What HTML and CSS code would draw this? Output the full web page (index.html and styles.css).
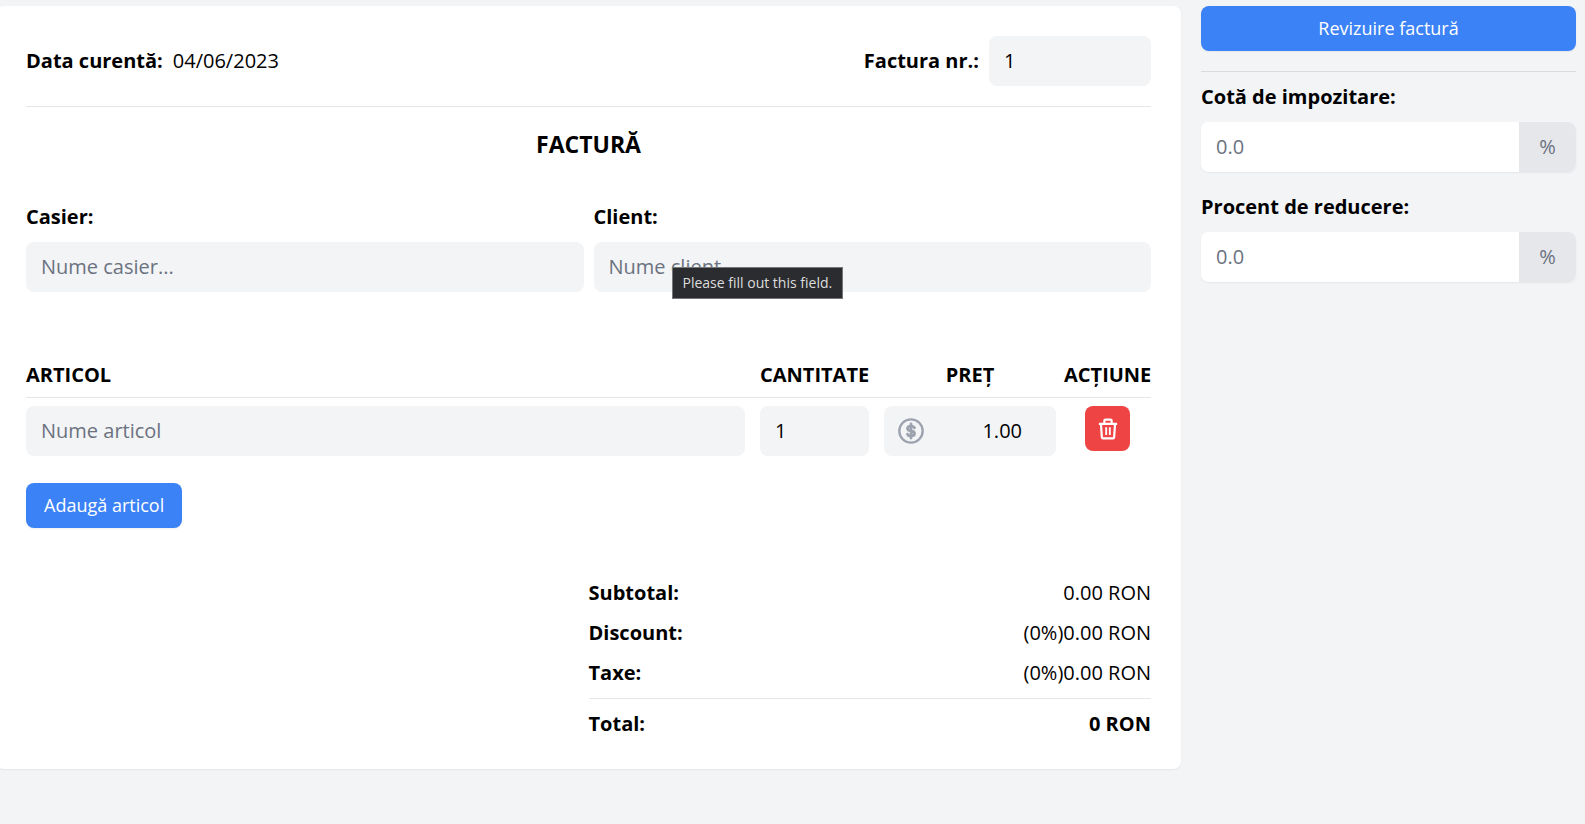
FILE: index.html
```html
<!DOCTYPE html>
<html lang="ro">
<head>
<meta charset="utf-8">
<title>Factură</title>
<link rel="stylesheet" href="styles.css">
</head>
<body>
<form class="page">
  <main class="invoice">
    <header class="invoice-head">
      <div class="inline"><span class="strong">Data curentă:</span><span>04/06/2023</span></div>
      <div class="inline"><label class="strong" for="number">Factura nr.:</label><input class="field number-field" id="number" type="number" value="1"></div>
    </header>
    <h1 class="title">FACTURĂ</h1>
    <section class="people">
      <div class="person">
        <label class="strong" for="cashier">Casier:</label>
        <input class="field" id="cashier" type="text" placeholder="Nume casier...">
      </div>
      <div class="person">
        <label class="strong" for="client">Client:</label>
        <input class="field" id="client" type="text" placeholder="Nume client...">
        <div class="tooltip" role="tooltip">Please fill out this field.</div>
      </div>
    </section>
    <table class="items">
      <thead>
        <tr><th class="col-name">ARTICOL</th><th class="col-qty">CANTITATE</th><th class="col-price">PREȚ</th><th class="col-action">ACȚIUNE</th></tr>
      </thead>
      <tbody>
        <tr>
          <td class="col-name"><input class="field" type="text" placeholder="Nume articol" aria-label="Nume articol"></td>
          <td class="col-qty"><input class="field" type="number" value="1" aria-label="Cantitate"></td>
          <td class="col-price">
            <div class="price">
              <svg class="coin" viewBox="0 0 24 24" fill="none" stroke="currentColor" stroke-width="2" stroke-linecap="round" aria-hidden="true"><circle cx="12" cy="12" r="10"/><path stroke-width="2.4" d="M15 9.300C14.500 8.200 13.300 7.800 12 7.800c-1.700 0-3 .8-3 2.100 0 1.400 1.300 1.800 3 2.100s3 .8 3 2.100-1.300 2.100-3 2.100c-1.400 0-2.600-.5-3-1.500M12 6v12"/></svg>
              <input class="field price-field" type="text" inputmode="decimal" value="1.00" aria-label="Preț">
            </div>
          </td>
          <td class="col-action">
            <button class="delete" type="button" aria-label="Șterge articol">
              <svg class="trash" viewBox="0 0 24 24" fill="none" stroke="currentColor" stroke-linejoin="round" aria-hidden="true"><path stroke-width="2.4" d="M2 6.300h20M4.300 6.300l1 14.500q.1 1.400 1.300 1.400h10.800q1.200 0 1.300-1.400l1-14.500M8 6V3q0-1.200 1.200-1.200h5.600q1.200 0 1.200 1.200V6"/><path stroke-width="2" d="M10 10v8.500M14 10v8.500"/></svg>
            </button>
          </td>
        </tr>
      </tbody>
    </table>
    <button class="button" type="button">Adaugă articol</button>
    <dl class="totals">
      <div class="total-row"><dt>Subtotal:</dt><dd>0.00 RON</dd></div>
      <div class="total-row"><dt>Discount:</dt><dd>(0%)0.00 RON</dd></div>
      <div class="total-row"><dt>Taxe:</dt><dd>(0%)0.00 RON</dd></div>
      <div class="total-row grand"><dt>Total:</dt><dd>0 RON</dd></div>
    </dl>
  </main>
  <aside class="side">
    <button class="button" type="submit">Revizuire factură</button>
    <div class="rates">
      <div class="rate">
        <label class="strong" for="tax">Cotă de impozitare:</label>
        <div class="group"><input class="field" id="tax" type="number" placeholder="0.0"><span class="unit">%</span></div>
      </div>
      <div class="rate">
        <label class="strong" for="discount">Procent de reducere:</label>
        <div class="group"><input class="field" id="discount" type="number" placeholder="0.0"><span class="unit">%</span></div>
      </div>
    </div>
  </aside>
</form>
</body>
</html>
```
FILE: styles.css
```css
*, *::before, *::after { box-sizing: border-box; }
body {
  margin: 0;
  background: #f3f4f6;
  color: #000;
  font: 400 20px/30px "Open Sans", "Noto Sans", sans-serif;
}
input, button { font: inherit; color: inherit; }
.page {
  display: flex;
  align-items: flex-start;
  gap: 20px;
  padding: 6px 9px 20px 0;
}
.invoice {
  flex: 1;
  min-width: 0;
  margin-left: -4px;
  padding: 30px;
  background: #fff;
  border-radius: 8px;
  box-shadow: 0 1px 2px rgba(0, 0, 0, 0.06);
}
.strong { font-weight: 700; }
.invoice-head {
  display: flex;
  justify-content: space-between;
  align-items: center;
  padding-bottom: 20px;
  border-bottom: 1px solid #e5e7eb;
}
.inline { display: flex; align-items: center; gap: 10px; }
.field {
  display: block;
  width: 100%;
  min-width: 0;
  height: 50px;
  margin: 0;
  padding: 0 15px 2px;
  border: 0;
  border-radius: 8px;
  background: #f3f4f6;
  appearance: textfield;
}
.field::placeholder { color: #6b7280; opacity: 1; }
.inline .number-field { width: 162px; }
.title {
  margin: 20px 0 40px;
  font-size: 23px;
  line-height: 35px;
  font-weight: 700;
  text-align: center;
}
.people { display: grid; grid-template-columns: 1fr 1fr; gap: 10px; }
.person { position: relative; display: grid; gap: 10px; }
.tooltip {
  position: absolute;
  top: 65px;
  left: 78px;
  padding: 4px 10px;
  border: 1px solid #767676;
  background: #2b2c2f;
  color: #ddd;
  font-size: 14px;
  line-height: 22px;
  white-space: nowrap;
}
.items {
  width: 100%;
  margin: 60px 0 27px;
  border-collapse: collapse;
  table-layout: fixed;
}
.items th {
  padding: 8px 0 7px;
  border-bottom: 1px solid #e5e7eb;
  font-weight: 700;
}
.items td { padding: 8px 0 0; vertical-align: top; }
.items .col-name { padding-right: 15px; text-align: left; }
.items .col-qty { width: 124px; padding-right: 15px; text-align: left; }
.items .col-price { width: 180px; padding-right: 8px; }
.items .col-action { width: 87px; text-align: center; }
.price {
  display: flex;
  align-items: center;
  padding-left: 13px;
  border-radius: 8px;
  background: #f3f4f6;
}
.coin { flex: none; width: 28px; height: 28px; color: #9ca3af; }
.price .price-field { padding-right: 34px; text-align: right; }
.delete {
  display: inline-flex;
  align-items: center;
  justify-content: center;
  width: 45px;
  height: 45px;
  padding: 0;
  border: 0;
  border-radius: 8px;
  background: #ef4444;
  color: #fff;
  vertical-align: top;
}
.trash { width: 22px; height: 22px; }
.button {
  display: block;
  height: 45px;
  padding: 0 18px;
  border: 0;
  border-radius: 8px;
  background: #3b82f6;
  color: #fff;
  font-size: 18px;
  line-height: 25px;
  box-shadow: 0 1px 2px rgba(0, 0, 0, 0.06);
}
.totals { width: 50%; margin: 50px 0 0 auto; }
.total-row { display: flex; justify-content: space-between; padding-bottom: 10px; }
.total-row dt { font-weight: 700; }
.total-row dd { margin: 0; }
.grand { padding: 10px 0 0; border-top: 1px solid #e5e7eb; font-weight: 700; }
.side { flex: none; width: 375px; }
.side .button { width: 100%; }
.rates {
  display: grid;
  gap: 20px;
  margin-top: 20px;
  padding-top: 10px;
  border-top: 1px solid #d9dbde;
}
.rate { display: grid; gap: 10px; }
.group {
  display: flex;
  overflow: hidden;
  border-radius: 8px;
  background: #fff;
  box-shadow: 0 1px 2px rgba(0, 0, 0, 0.06);
}
.group .field { flex: 1; border-radius: 0; background: #fff; }
.unit {
  flex: none;
  width: 57px;
  background: #e5e7eb;
  color: #6b7280;
  line-height: 50px;
  text-align: center;
}
```
